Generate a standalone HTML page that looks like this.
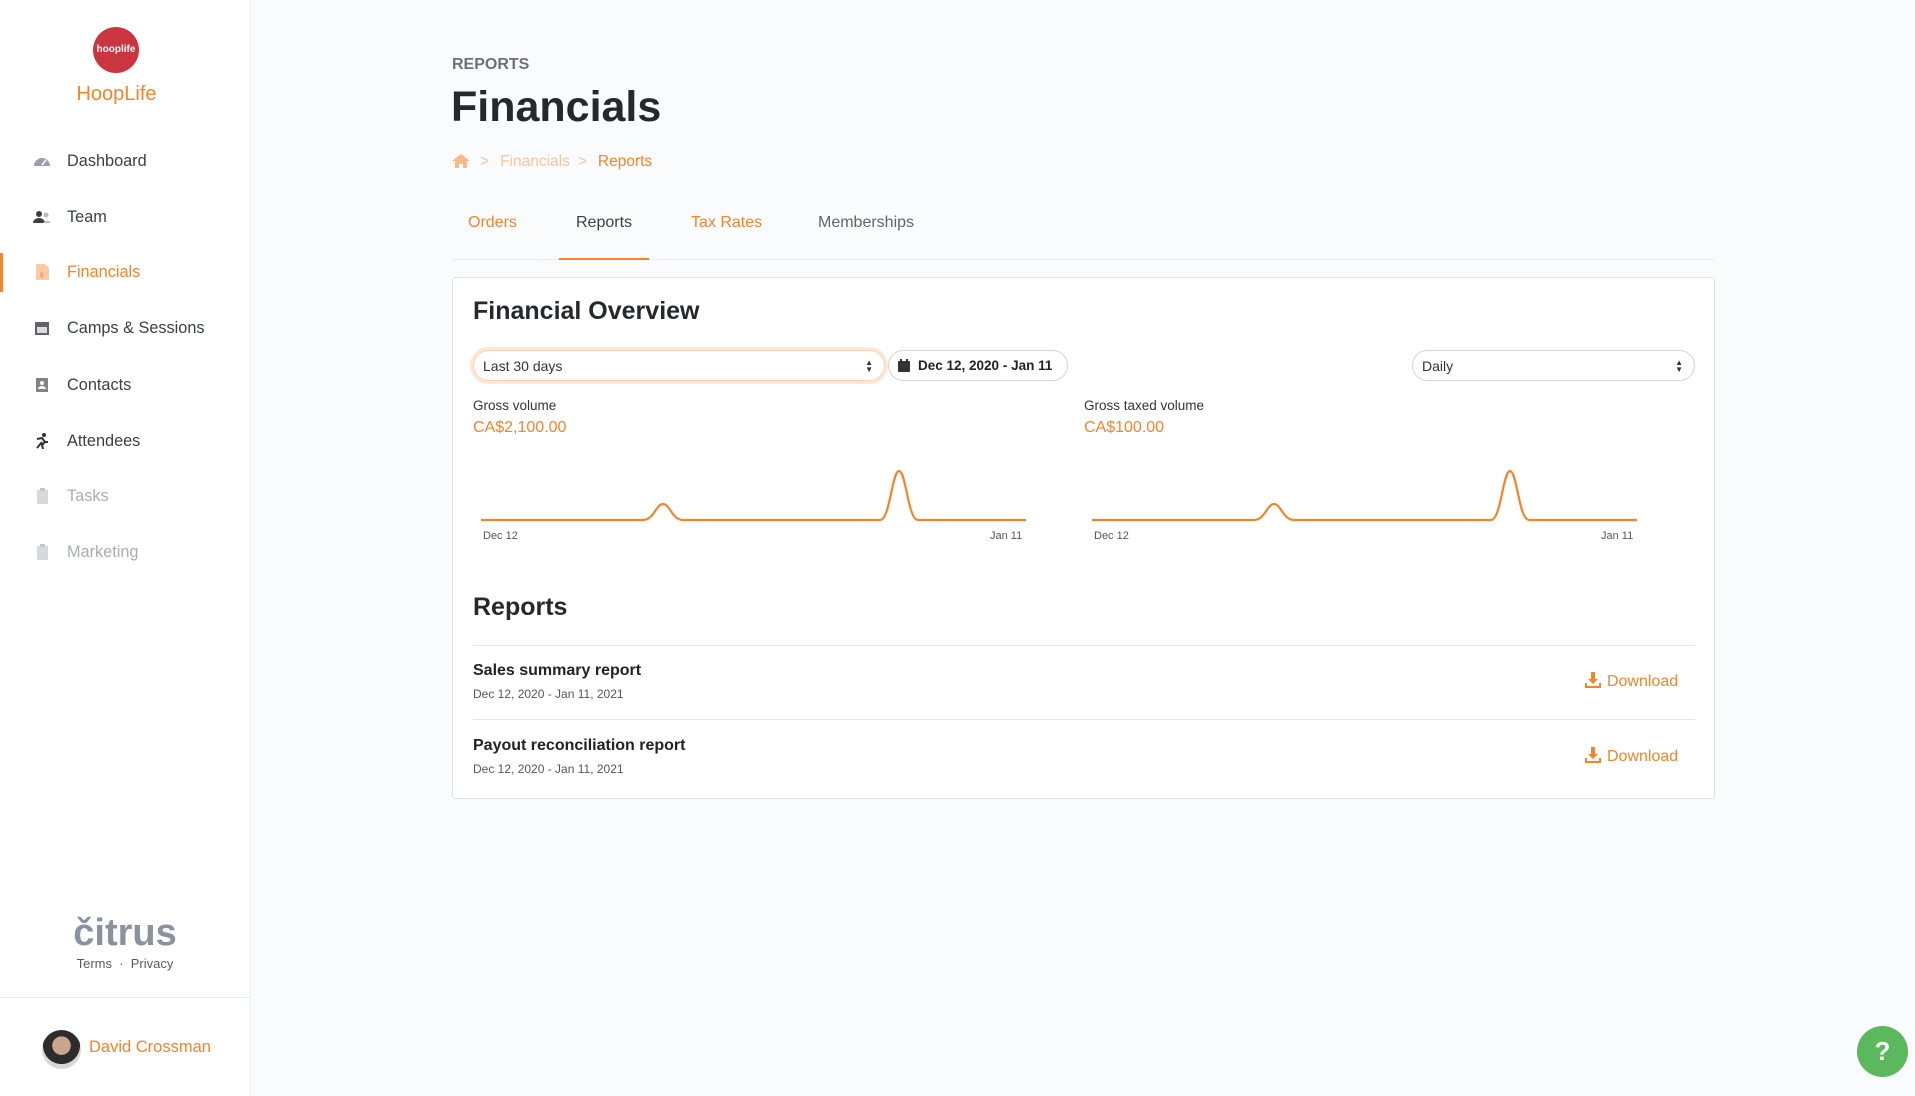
<!DOCTYPE html>
<html><head><meta charset="utf-8"><style>
*{box-sizing:border-box;margin:0;padding:0}
body{width:1915px;height:1096px;background:#fafbfd;font-family:"Liberation Sans",sans-serif;position:relative;overflow:hidden;color:#333}
.abs{position:absolute}
#side{position:absolute;left:0;top:0;width:251px;height:1096px;background:#fff;border-right:1px solid #eceef2}
.nav{position:absolute;left:0;width:250px;height:40px;display:flex;align-items:center;font-size:16.3px;color:#3a3f45}
.nav .ic{position:absolute;left:33px;width:18px;height:16px}
.nav span{position:absolute;left:67px}
.or{color:#f5842b}
.lbl{font-size:13.5px;color:#333}
.card{position:absolute;left:452px;top:277px;width:1263px;height:522px;background:#fff;border:1px solid #dfe2e6;border-radius:3px}
.sel{position:absolute;height:31px;border:1px solid #cfd5dd;border-radius:16px;background:#fff;font-size:14px;color:#333;display:flex;align-items:center;padding-left:9px}
.arr{position:absolute;right:11px;top:8px;font-size:8px;line-height:7px;color:#333}
.row-t{position:absolute;left:473px;font-size:16px;font-weight:bold;color:#222}
.row-d{position:absolute;left:473px;font-size:12px;color:#555}
.dl{position:absolute;left:1585px;font-size:16px;color:#f5842b}
.hr{position:absolute;left:473px;width:1222px;height:1px;background:#e3e5e8}
</style></head><body>
<div id="side">
 <div class="abs" style="left:93px;top:27px;width:46px;height:46px;border-radius:50%;background:#cb3540;color:#fff;font-size:10px;font-weight:bold;text-align:center;line-height:46px">hooplife</div>
 <div class="abs or" style="left:0;width:233px;top:83px;text-align:center;font-size:20px">HoopLife</div>
 <div class="nav" style="top:141px"><svg class="ic" viewBox="0 0 18 16"><path d="M1 13a8 8 0 0 1 16 0z" fill="#9aa0a6"/><path d="M9 12l4-5" stroke="#fff" stroke-width="1.5"/></svg><span>Dashboard</span></div>
 <div class="nav" style="top:197px"><svg class="ic" viewBox="0 0 18 16"><circle cx="6" cy="5" r="3" fill="#3a3f45"/><path d="M0 14a6 5 0 0 1 12 0z" fill="#3a3f45"/><circle cx="13" cy="6" r="2.5" fill="#b8bcc2"/><path d="M10 14a4.5 4 0 0 1 8 0z" fill="#b8bcc2"/></svg><span>Team</span></div>
 <div class="abs" style="left:0;top:253px;width:3px;height:39px;background:#f5842b"></div>
 <div class="nav" style="top:252px;color:#f5842b"><svg class="ic" viewBox="0 0 18 16"><path d="M3 0h9l4 4v12H3z" fill="#fcc9a3"/><text x="7" y="13" font-size="6" fill="#f5842b">$</text></svg><span>Financials</span></div>
 <div class="nav" style="top:308px"><svg class="ic" viewBox="0 0 18 16"><rect x="2" y="2" width="14" height="13" fill="#5f646b"/><rect x="4" y="7" width="10" height="6" fill="#ddd"/></svg><span>Camps &amp; Sessions</span></div>
 <div class="nav" style="top:365px"><svg class="ic" viewBox="0 0 18 16"><rect x="3" y="1" width="12" height="14" fill="#7f8489"/><circle cx="9" cy="6" r="2" fill="#fff"/><path d="M5 12a4 3 0 0 1 8 0z" fill="#fff"/></svg><span>Contacts</span></div>
 <div class="nav" style="top:421px"><svg class="ic" viewBox="0 0 18 16"><circle cx="11" cy="2" r="2" fill="#333"/><path d="M4 6l5-1 3 4-3 3 1 4M9 9l-5 6M12 9h3" stroke="#333" stroke-width="2" fill="none"/></svg><span>Attendees</span></div>
 <div class="nav" style="top:476px;color:#a8adb3"><svg class="ic" viewBox="0 0 18 16"><rect x="4" y="2" width="11" height="14" fill="#d7d9dc"/><rect x="7" y="0" width="5" height="3" fill="#c5c8cc"/></svg><span>Tasks</span></div>
 <div class="nav" style="top:532px;color:#a8adb3"><svg class="ic" viewBox="0 0 18 16"><rect x="4" y="2" width="11" height="14" fill="#d7d9dc"/><rect x="7" y="0" width="5" height="3" fill="#c5c8cc"/></svg><span>Marketing</span></div>
 <div class="abs" style="left:0;width:250px;top:912px;text-align:center;font-size:38px;font-weight:bold;color:#8a929f">čitrus</div>
 <div class="abs" style="left:0;width:250px;top:956px;text-align:center;font-size:13px;color:#555b63">Terms &nbsp;·&nbsp; Privacy</div>
 <div class="abs" style="left:0;top:997px;width:250px;height:1px;background:#e6ebf0"></div>
 <div class="abs" style="left:42px;top:1030px;width:39px;height:39px;border-radius:50%;background:radial-gradient(circle at 50% 40%,#c9a58f 0 30%,#2c2c2c 31% 60%,#d8d4d8 61%)"></div>
 <div class="abs or" style="left:89px;top:1038px;font-size:16.5px">David Crossman</div>
</div>

<div class="abs" style="left:452px;top:56px;font-size:16px;font-weight:bold;color:#6b7079">REPORTS</div>
<div class="abs" style="left:451px;top:83px;font-size:43px;font-weight:bold;color:#24292e">Financials</div>
<div class="abs" style="left:452px;top:153px;font-size:15.5px;color:#fbc49c;display:flex;gap:0">
 <svg width="18" height="16" viewBox="0 0 18 16"><path d="M9 1L0 8h3v7h4v-4h4v4h4V8h3z" fill="#fbb98a"/></svg>
 <span style="margin-left:10px">&gt;</span><span style="margin-left:11px">Financials</span><span style="margin-left:8px">&gt;</span><span style="margin-left:11px;color:#f5842b">Reports</span>
</div>
<div class="abs or" style="left:468px;top:214px;font-size:16px">Orders</div>
<div class="abs" style="left:576px;top:214px;font-size:16px;color:#3a3f45">Reports</div>
<div class="abs or" style="left:691px;top:214px;font-size:16px">Tax Rates</div>
<div class="abs" style="left:818px;top:214px;font-size:16px;color:#5f656d">Memberships</div>
<div class="abs" style="left:452px;top:259px;width:1263px;height:1px;background:#e9ecf0"></div>
<div class="abs" style="left:559px;top:258px;width:90px;height:2px;background:#f5842b"></div>

<div class="card"></div>
<div class="abs" style="left:473px;top:297px;font-size:25px;font-weight:bold;color:#24292e">Financial Overview</div>
<div class="sel" style="left:473px;top:350px;width:412px;border-color:#fbd3b3;box-shadow:0 0 0 3px #fde7d6">Last 30 days<div class="arr">▲<br>▼</div></div>
<div class="sel" style="left:888px;top:350px;width:180px;font-weight:bold;color:#222;font-size:13.5px"><svg width="12" height="13" viewBox="0 0 12 13" style="margin-right:8px"><rect x="0" y="2" width="12" height="11" rx="1" fill="#333"/><rect x="2" y="0" width="2" height="3" fill="#333"/><rect x="8" y="0" width="2" height="3" fill="#333"/></svg>Dec 12, 2020 - Jan 11</div>
<div class="sel" style="left:1412px;top:350px;width:283px">Daily<div class="arr">▲<br>▼</div></div>

<div class="abs lbl" style="left:473px;top:398px">Gross volume</div>
<div class="abs or" style="left:473px;top:419px;font-size:16px">CA$2,100.00</div>
<div class="abs lbl" style="left:1084px;top:398px">Gross taxed volume</div>
<div class="abs or" style="left:1084px;top:419px;font-size:16px">CA$100.00</div>
<svg class="abs" style="left:0;top:0" width="1915" height="560">
 <g fill="none" stroke="#f5842b" stroke-width="2.2">
  <path d="M481 520H643C654 520 656 504 663 504S672 520 683 520H880C890 520 892 471 899 471S908 520 918 520H1026"/>
  <path d="M1092 520H1254C1265 520 1267 504 1274 504S1283 520 1294 520H1491C1501 520 1503 471 1510 471S1519 520 1529 520H1637"/>
 </g>
 <g font-family="Liberation Sans" font-size="11" fill="#555">
  <text x="483" y="539">Dec 12</text><text x="990" y="539">Jan 11</text>
  <text x="1094" y="539">Dec 12</text><text x="1601" y="539">Jan 11</text>
 </g>
</svg>

<div class="abs" style="left:473px;top:593px;font-size:25px;font-weight:bold;color:#24292e">Reports</div>
<div class="hr" style="top:645px"></div>
<div class="row-t" style="top:662px">Sales summary report</div>
<div class="row-d" style="top:687px">Dec 12, 2020 - Jan 11, 2021</div>
<div class="dl" style="top:672px"><svg width="16" height="16" viewBox="0 0 16 16" style="vertical-align:-2px;margin-right:6px"><path d="M6 0h4v7h3l-5 5-5-5h3z M0 11h2v3h12v-3h2v5H0z" fill="#f5842b"/></svg>Download</div>
<div class="hr" style="top:719px"></div>
<div class="row-t" style="top:737px">Payout reconciliation report</div>
<div class="row-d" style="top:762px">Dec 12, 2020 - Jan 11, 2021</div>
<div class="dl" style="top:747px"><svg width="16" height="16" viewBox="0 0 16 16" style="vertical-align:-2px;margin-right:6px"><path d="M6 0h4v7h3l-5 5-5-5h3z M0 11h2v3h12v-3h2v5H0z" fill="#f5842b"/></svg>Download</div>

<div class="abs" style="left:1857px;top:1026px;width:51px;height:51px;border-radius:50%;background:#5cb85c;color:#fff;font-size:26px;font-weight:bold;text-align:center;line-height:51px">?</div>
</body></html>
